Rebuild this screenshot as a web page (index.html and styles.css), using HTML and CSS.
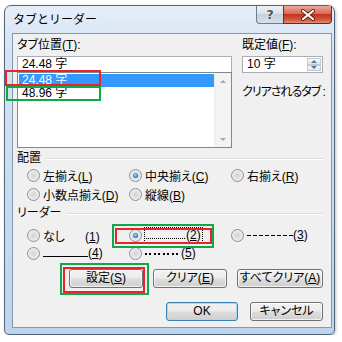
FILE: index.html
```html
<!DOCTYPE html>
<html lang="ja">
<head>
    <meta charset="UTF-8">
    <title>タブとリーダー</title>
    <link rel="stylesheet" href="styles.css">
</head>
<body>

<div class="window">
    <div class="titlebar">
        <span class="title">タブとリーダー</span>
        <div class="caption">
            <span class="cap-help">?</span>
            <span class="cap-close">
                <svg width="16" height="12" viewBox="0 0 16 12">
                    <path d="M3 2 L13 10 M13 2 L3 10" stroke="#5a2218" stroke-width="4" stroke-linecap="round"/>
                    <path d="M3 2 L13 10 M13 2 L3 10" stroke="#fff" stroke-width="2.2" stroke-linecap="round"/>
                </svg>
            </span>
        </div>
    </div>

    <div class="client">
        <div class="top">
            <div class="col-left">
                <div class="label">タブ位置(<u>T</u>):</div>
                <div class="textbox">24.48 字</div>
                <div class="listbox">
                    <div class="items">
                        <div class="item selected">24.48 字</div>
                        <div class="item">48.96 字</div>
                    </div>
                    <div class="scrollbar">
                        <span class="arrow up"></span>
                        <span class="arrow down"></span>
                    </div>
                </div>
            </div>
            <div class="col-right">
                <div class="label">既定値(<u>F</u>):</div>
                <div class="spin">
                    <span class="spin-text">10 字</span>
                    <span class="spin-btns">
                        <span class="spin-btn"><span class="tri up"></span></span>
                        <span class="spin-btn"><span class="tri down"></span></span>
                    </span>
                </div>
                <div class="label clear-label">クリアされるタブ :</div>
            </div>
        </div>

        <div class="group-title"><span>配置</span><span class="rule"></span></div>
        <div class="options">
            <label class="opt"><span class="radio"></span><span>左揃え(<u>L</u>)</span></label>
            <label class="opt"><span class="radio checked"></span><span>中央揃え(<u>C</u>)</span></label>
            <label class="opt"><span class="radio"></span><span>右揃え(<u>R</u>)</span></label>
            <label class="opt"><span class="radio"></span><span>小数点揃え(<u>D</u>)</span></label>
            <label class="opt"><span class="radio"></span><span>縦線(<u>B</u>)</span></label>
        </div>

        <div class="group-title leader-title"><span>リーダー</span><span class="rule"></span></div>
        <div class="options leaders">
            <label class="opt"><span class="radio"></span><span>なし<span class="gap"></span>(<u>1</u>)</span></label>
            <label class="opt"><span class="radio checked"></span><span class="focus"><span class="lead lead-dot"></span>(<u>2</u>)</span></label>
            <label class="opt"><span class="radio"></span><span><span class="lead lead-dash"></span>(<u>3</u>)</span></label>
            <label class="opt"><span class="radio"></span><span><span class="lead lead-line"></span>(<u>4</u>)</span></label>
            <label class="opt"><span class="radio"></span><span><span class="lead lead-mid"></span>(<u>5</u>)</span></label>
        </div>

        <div class="buttons">
            <span class="button w74"><span>設定(<u>S</u>)</span></span>
            <span class="button w74"><span>クリア(<u>E</u>)</span></span>
            <span class="button w86"><span>すべてクリア(<u>A</u>)</span></span>
        </div>
        <div class="buttons bottom">
            <span class="button default w72">OK</span>
            <span class="button w73">キャンセル</span>
        </div>
    </div>
</div>

<!-- annotation boxes drawn over the dialog -->
<div class="mark red" style="left:5px; top:70px; width:96px; height:16px;"></div>
<div class="mark green" style="left:6px; top:86px; width:95px; height:15px;"></div>
<div class="mark green" style="left:112px; top:224px; width:102px; height:24px;"></div>
<div class="mark red" style="left:115px; top:228px; width:97px; height:16px;"></div>
<div class="mark green" style="left:60px; top:263px; width:89px; height:32px;"></div>
<div class="mark red" style="left:63px; top:267px; width:82px; height:26px;"></div>

</body>
</html>
```

FILE: styles.css
```css
* {
    box-sizing: border-box;
}

body {
    margin: 0;
    background-color: #fff;
    font-family: "Liberation Sans", "Noto Sans CJK JP", sans-serif;
    font-size: 12px;
    font-feature-settings: "palt";
    color: #000;
}

u {
    text-decoration: underline;
    text-underline-offset: 1px;
}

.window {
    margin: 5px 0 0 4px;
    width: 331px;
    height: 330px;
    border: 1px solid #55657a;
    border-radius: 7px 7px 5px 5px;
    background: linear-gradient(#e6eef8, #d6e4f4 12%, #c6dbf1 60%, #bcd4ee);
    padding: 0 2px 6px 7px;
    box-shadow: 1px 1px 3px rgba(0, 0, 0, 0.25);
}

.titlebar {
    height: 27px;
    display: flex;
    justify-content: space-between;
    align-items: flex-start;
}

.title {
    margin: 7px 0 0 1px;
    line-height: 15px;
    font-feature-settings: normal;
}

.caption {
    display: flex;
}

.cap-help,
.cap-close {
    height: 18px;
    display: flex;
    align-items: center;
    justify-content: center;
    border: 1px solid #6d7b8c;
    border-top: none;
}

.cap-help {
    width: 27px;
    border-right: none;
    border-radius: 0 0 0 4px;
    background: linear-gradient(#edf1f6, #dbe3ec 45%, #c6d1dd 50%, #d6dfe9);
    font-family: "DejaVu Sans", sans-serif;
    font-weight: bold;
    font-size: 13px;
    color: #4a5462;
    text-shadow: 0 0 2px #fff, 0 0 1px #fff;
}

.cap-close {
    width: 49px;
    border-color: #6e2a1f;
    border-radius: 0 0 4px 0;
    background: linear-gradient(#e9a99b, #d56d58 45%, #c2351c 50%, #d2573e 80%, #e48c73);
}

.client {
    width: 320px;
    height: 295px;
    background-color: #f0f0f0;
    border: 1px solid #8796a8;
    padding: 4px 8px 0 4px;
}

.top {
    display: flex;
    gap: 10px;
}

.col-left {
    width: 215px;
}

.col-right {
    width: 81px;
}

.label {
    height: 15px;
    line-height: 15px;
    margin-bottom: 3px;
    white-space: nowrap;
}

.textbox {
    height: 16px;
    border: 1px solid #abadb3;
    border-bottom: none;
    background-color: #fff;
    padding-left: 4px;
    line-height: 15px;
}

.listbox {
    height: 76px;
    border: 1px solid #828790;
    background-color: #fff;
    display: flex;
}

.items {
    flex: 1;
    padding: 1px 0 0 1px;
}

.item {
    height: 13px;
    line-height: 13px;
    padding-left: 3px;
}

.item.selected {
    background-color: #3399ff;
    color: #fff;
}

.scrollbar {
    width: 17px;
    background-color: #f3f3f3;
    border-left: 1px solid #ececec;
    display: flex;
    flex-direction: column;
    justify-content: space-between;
    align-items: center;
    padding: 7px 0 6px;
}

.arrow {
    width: 0;
    height: 0;
    border-left: 3px solid transparent;
    border-right: 3px solid transparent;
}

.arrow.up {
    border-bottom: 3px solid #a8a8a8;
}

.arrow.down {
    border-top: 3px solid #a8a8a8;
}

.spin {
    height: 17px;
    border: 1px solid #abadb3;
    background-color: #fff;
    display: flex;
}

.spin-text {
    flex: 1;
    padding-left: 4px;
    line-height: 15px;
}

.spin-btns {
    width: 15px;
    display: flex;
    flex-direction: column;
    padding: 1px 1px 1px 0;
}

.spin-btn {
    flex: 1;
    border: 1px solid #c3cad2;
    background: linear-gradient(#f7f8fa, #e1e5ea);
    display: flex;
    align-items: center;
    justify-content: center;
}

.tri {
    width: 0;
    height: 0;
    border-left: 3px solid transparent;
    border-right: 3px solid transparent;
}

.tri.up {
    border-bottom: 3px solid #4e78a8;
}

.tri.down {
    border-top: 3px solid #4e78a8;
}

.clear-label {
    margin-top: 12px;
    letter-spacing: -1px;
}

.group-title {
    margin-top: 3px;
    height: 15px;
    line-height: 15px;
    display: flex;
    align-items: center;
    gap: 6px;
}

.group-title .rule {
    flex: 1;
    height: 2px;
    border-top: 1px solid #d5dfe5;
    border-bottom: 1px solid #fff;
}

.leader-title {
    margin-top: 2px;
}

.options {
    padding-left: 10px;
    display: grid;
    grid-template-columns: 102px 102px 102px;
    grid-auto-rows: 19px;
}

.leaders {
    margin-top: 5px;
    grid-auto-rows: 18px;
}

.opt {
    display: flex;
    align-items: center;
    gap: 3px;
    white-space: nowrap;
}

.radio {
    flex: none;
    width: 13px;
    height: 13px;
    border-radius: 50%;
    border: 1px solid #8e8f8f;
    background: radial-gradient(circle, #d2d2d2 0, #e4e4e4 45%, #f7f7f7 100%);
    position: relative;
}

.radio.checked::after {
    content: "";
    position: absolute;
    left: 3px;
    top: 3px;
    width: 5px;
    height: 5px;
    border-radius: 50%;
    background: radial-gradient(circle at 45% 40%, #9ee0ff, #2a7fd0 60%, #134d8a);
}

.gap {
    display: inline-block;
    width: 20px;
}

.focus {
    outline: 1px dotted #000;
    padding: 0 1px;
    line-height: 14px;
}

.lead {
    display: inline-block;
}

.lead-dot {
    width: 40px;
    height: 1px;
    background: repeating-linear-gradient(90deg, #000 0 1px, transparent 1px 2px);
}

.lead-dash {
    width: 46px;
    height: 1px;
    vertical-align: middle;
    background: repeating-linear-gradient(90deg, #000 0 4px, transparent 4px 6px);
}

.lead-line {
    width: 45px;
    height: 1px;
    background-color: #000;
}

.lead-mid {
    width: 36px;
    height: 2px;
    vertical-align: middle;
    background: repeating-linear-gradient(90deg, #000 0 2px, transparent 2px 4.5px);
}

.buttons {
    margin-top: 7px;
    display: flex;
    justify-content: flex-end;
    gap: 10px;
}

.buttons.bottom {
    margin-top: 14px;
    gap: 12px;
}

.button {
    height: 19px;
    border: 1px solid #707070;
    border-radius: 3px;
    background: linear-gradient(#f2f2f2, #ebebeb 48%, #dddddd 52%, #cfcfcf);
    box-shadow: inset 0 0 0 1px rgba(255, 255, 255, 0.7);
    display: flex;
    align-items: center;
    justify-content: center;
    line-height: 17px;
    white-space: nowrap;
}

.button.default {
    border-color: #3c7fb1;
    box-shadow: inset 0 0 0 1px #9fdcf7;
}

.w72 { width: 72px; }
.w73 { width: 73px; }
.w74 { width: 74px; }
.w86 { width: 86px; }

.mark {
    position: absolute;
    border: 2px solid;
}

.mark.red {
    border-color: #e8232a;
}

.mark.green {
    border-color: #0ca84a;
}
```
